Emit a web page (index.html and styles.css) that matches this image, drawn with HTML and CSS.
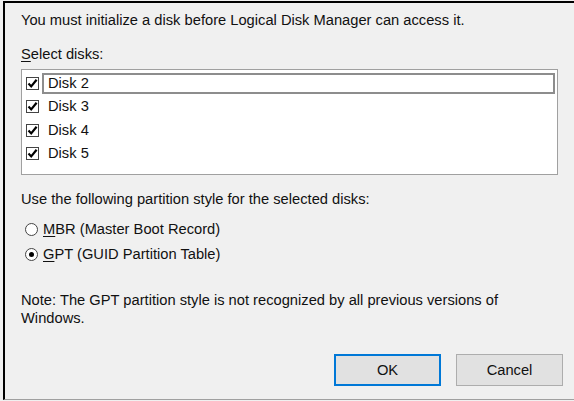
FILE: index.html
```html
<!DOCTYPE html>
<html lang="en">
<head>
<meta charset="utf-8">
<title>Initialize Disk</title>
<link rel="stylesheet" href="styles.css">
</head>
<body>
<div class="dialog">
  <div class="content">
    <p class="intro">You must initialize a disk before Logical Disk Manager can access it.</p>
    <p class="label"><u>S</u>elect disks:</p>
    <div class="listbox">
      <div class="row focused">
        <span class="check"><svg viewBox="0 0 11 11" width="11" height="11"><path d="M1.5 5.5 L4.2 8.4 L9.6 1.8" fill="none" stroke="#000" stroke-width="2.2"/></svg></span>
        <span class="item">Disk 2</span>
      </div>
      <div class="row">
        <span class="check"><svg viewBox="0 0 11 11" width="11" height="11"><path d="M1.5 5.5 L4.2 8.4 L9.6 1.8" fill="none" stroke="#000" stroke-width="2.2"/></svg></span>
        <span class="item">Disk 3</span>
      </div>
      <div class="row">
        <span class="check"><svg viewBox="0 0 11 11" width="11" height="11"><path d="M1.5 5.5 L4.2 8.4 L9.6 1.8" fill="none" stroke="#000" stroke-width="2.2"/></svg></span>
        <span class="item">Disk 4</span>
      </div>
      <div class="row">
        <span class="check"><svg viewBox="0 0 11 11" width="11" height="11"><path d="M1.5 5.5 L4.2 8.4 L9.6 1.8" fill="none" stroke="#000" stroke-width="2.2"/></svg></span>
        <span class="item">Disk 5</span>
      </div>
    </div>
    <p class="style-label">Use the following partition style for the selected disks:</p>
    <div class="radios">
      <div class="radio-row"><span class="radio"></span><span><u>M</u>BR (Master Boot Record)</span></div>
      <div class="radio-row"><span class="radio on"></span><span><u>G</u>PT (GUID Partition Table)</span></div>
    </div>
    <p class="note">Note: The GPT partition style is not recognized by all previous versions of Windows.</p>
  </div>
  <div class="buttons">
    <button class="btn default">OK</button>
    <button class="btn">Cancel</button>
  </div>
</div>
</body>
</html>
```
FILE: styles.css
```css
* { box-sizing: border-box; }

html, body {
  margin: 0;
  padding: 0;
  background: #f0f0f0;
}

body {
  font-family: "Liberation Sans", Arial, sans-serif;
  font-size: 14.7px;
  color: #111;
}

.dialog {
  margin: 1px 0 0 3px;
  height: 399px;
  border-top: 2px solid #000;
  border-left: 2px solid #000;
  border-bottom: 1px solid #a0a0a0;
  display: flex;
  flex-direction: column;
}

.content {
  padding: 8px 0 0 16px;
  flex: 1;
}

p { margin: 0; }

.intro { line-height: 18px; }

.label {
  margin-top: 16px;
  line-height: 18px;
}

u { text-decoration-thickness: 1px; text-underline-offset: 2px; }

.listbox {
  margin-top: 6px;
  width: 537px;
  height: 106px;
  background: #fff;
  border: 1px solid #a0a0a0;
  padding: 2px 2px 0 0;
}

.row {
  display: flex;
  align-items: center;
  height: 23.3px;
}

.check {
  width: 13px;
  height: 13px;
  margin-left: 4px;
  border: 1px solid #444;
  background: #fff;
  display: flex;
  align-items: center;
  justify-content: center;
  flex: none;
}

.item {
  flex: 1;
  margin-left: 3px;
  padding-left: 4px;
  height: 21px;
  line-height: 17px;
  border: 2px solid transparent;
}

/* keyboard focus rectangle around the current item */
.focused .item {
  border-color: #8d8d8d;
}

.style-label {
  margin-top: 15px;
  line-height: 18px;
}

.radios {
  margin-top: 12px;
  display: flex;
  flex-direction: column;
  gap: 7px;
}

.radio-row {
  display: flex;
  align-items: center;
  gap: 5px;
  height: 18px;
  padding-left: 4px;
}

.radio {
  width: 13px;
  height: 13px;
  border: 1px solid #444;
  border-radius: 50%;
  background: #fff;
  display: flex;
  align-items: center;
  justify-content: center;
}

.radio.on::after {
  content: "";
  width: 5px;
  height: 5px;
  border-radius: 50%;
  background: #000;
}

.note {
  margin-top: 28px;
  line-height: 18px;
  width: 520px;
}

.buttons {
  display: flex;
  justify-content: flex-end;
  gap: 15px;
  padding: 0 11px 13px 0;
}

.btn {
  width: 107px;
  height: 32px;
  font: inherit;
  color: #111;
  background: #e1e1e1;
  border: 1px solid #adadad;
  padding: 0;
}

.btn.default {
  border: 2px solid #0078d7;
}
```
